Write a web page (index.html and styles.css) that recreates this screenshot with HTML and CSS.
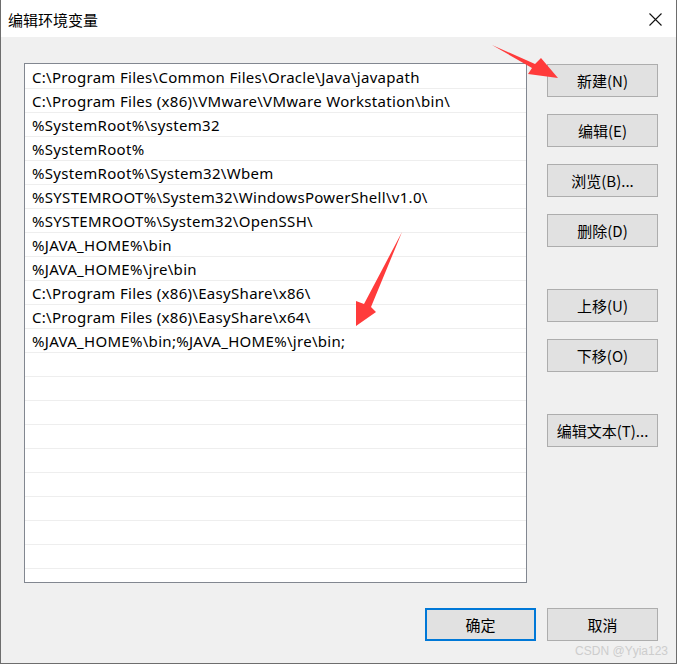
FILE: index.html
```html
<!DOCTYPE html>
<html lang="zh-CN">
<head>
<meta charset="utf-8">
<title>编辑环境变量</title>
<link rel="stylesheet" href="styles.css">
</head>
<body>
<div class="window">
  <div class="titlebar">
    <span class="title">编辑环境变量</span>
    <svg class="close" width="13" height="13" viewBox="0 0 13 13"><path d="M0.5 0.5 L12.5 12.5 M12.5 0.5 L0.5 12.5" stroke="#111" stroke-width="1.1" fill="none"/></svg>
  </div>
  <div class="body">
    <div class="main">
      <div class="list">
        <div class="row">C:\Program Files\Common Files\Oracle\Java\javapath</div>
        <div class="row">C:\Program Files (x86)\VMware\VMware Workstation\bin\</div>
        <div class="row">%SystemRoot%\system32</div>
        <div class="row">%SystemRoot%</div>
        <div class="row">%SystemRoot%\System32\Wbem</div>
        <div class="row">%SYSTEMROOT%\System32\WindowsPowerShell\v1.0\</div>
        <div class="row">%SYSTEMROOT%\System32\OpenSSH\</div>
        <div class="row">%JAVA_HOME%\bin</div>
        <div class="row">%JAVA_HOME%\jre\bin</div>
        <div class="row">C:\Program Files (x86)\EasyShare\x86\</div>
        <div class="row">C:\Program Files (x86)\EasyShare\x64\</div>
        <div class="row">%JAVA_HOME%\bin;%JAVA_HOME%\jre\bin;</div>
        <div class="row"></div>
        <div class="row"></div>
        <div class="row"></div>
        <div class="row"></div>
        <div class="row"></div>
        <div class="row"></div>
        <div class="row"></div>
        <div class="row"></div>
        <div class="row"></div>
        <div class="row"></div>
      </div>
      <div class="side">
        <button class="btn">新建(N)</button>
        <button class="btn">编辑(E)</button>
        <button class="btn">浏览(B)...</button>
        <button class="btn">删除(D)</button>
        <button class="btn far">上移(U)</button>
        <button class="btn">下移(O)</button>
        <button class="btn far">编辑文本(T)...</button>
      </div>
    </div>
    <div class="footer">
      <button class="btn primary">确定</button>
      <button class="btn">取消</button>
    </div>
  </div>
  <svg class="arrows" width="677" height="664" viewBox="0 0 677 664">
    <polygon points="492,45 535,64 541,58 558,78 528,74 532,68" fill="#ff3b3b"/>
    <polygon points="402,232 371,307 376,312 356,326 356,301 364,304" fill="#ff3b3b"/>
  </svg>
  <div class="watermark">CSDN @Yyia123</div>
</div>
</body>
</html>
```
FILE: styles.css
```css
* { box-sizing: border-box; }
html, body { margin: 0; padding: 0; background: #f0f0f0; }
body { font-family: "Noto Sans", "Noto Sans CJK SC", sans-serif; }

.window {
  position: relative;
  width: 677px;
  height: 664px;
  border-left: 1px solid #6d6d6d;
  border-right: 1px solid #6d6d6d;
  border-bottom: 1px solid #6d6d6d;
  background: #f0f0f0;
  display: flex;
  flex-direction: column;
  overflow: hidden;
}

.titlebar {
  height: 37px;
  background: #ffffff;
  display: flex;
  align-items: center;
  justify-content: space-between;
  padding: 0 14px 0 7px;
}
.title {
  font-family: "Noto Sans CJK SC", sans-serif;
  font-size: 15px;
  color: #000;
  line-height: 1;
  margin-top: 1px;
}
.close { display: block; margin-top: 1px; }

.body {
  flex: 1;
  display: flex;
  flex-direction: column;
  padding: 26px 18px 0 23px;
}

.main {
  display: flex;
  align-items: flex-start;
}

.list {
  width: 503px;
  height: 520px;
  background: #fff;
  border: 1px solid #828790;
  padding-top: 1px;
  overflow: hidden;
}
.row {
  height: 24px;
  border-bottom: 1px solid #eeeeee;
  padding: 1px 0 0 7px;
  font-size: 15px;
  letter-spacing: 0.3px;
  line-height: 23px;
  color: #000;
  white-space: nowrap;
}

.side {
  margin-left: 20px;
  display: flex;
  flex-direction: column;
  gap: 17px;
  padding-top: 1px;
}
.side .far { margin-top: 25px; }

.btn {
  width: 111px;
  height: 33px;
  background: #e1e1e1;
  border: 1px solid #adadad;
  font-family: "Noto Sans CJK SC", sans-serif;
  font-size: 15px;
  color: #000;
  padding: 0;
  margin: 0;
  line-height: 1;
}
.btn.primary {
  border: 2px solid #0078d7;
}

.footer {
  display: flex;
  justify-content: flex-end;
  gap: 11px;
  margin-top: 25px;
}

.arrows {
  position: absolute;
  left: -1px;
  top: 0;
  pointer-events: none;
}

.watermark {
  position: absolute;
  right: 8px;
  bottom: 5px;
  font-family: "Liberation Sans", sans-serif;
  font-size: 12px;
  color: #cdcdcd;
}
```
